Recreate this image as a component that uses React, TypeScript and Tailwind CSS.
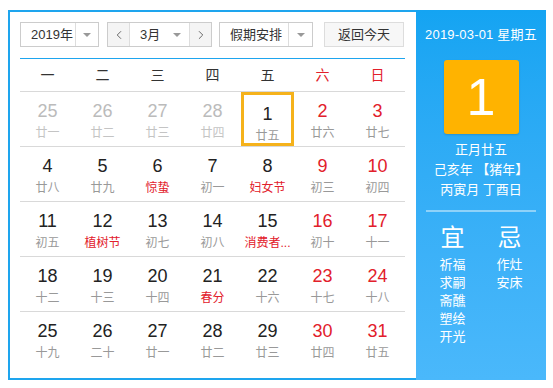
import React from "react";
import { ChevronLeft, ChevronRight } from "lucide-react";

type Day = { n: number; lunar: string; muted?: boolean; redNum?: boolean; redLunar?: boolean; selected?: boolean };

const weeks: Day[][] = [
  [
    { n: 25, lunar: "廿一", muted: true },
    { n: 26, lunar: "廿二", muted: true },
    { n: 27, lunar: "廿三", muted: true },
    { n: 28, lunar: "廿四", muted: true },
    { n: 1, lunar: "廿五", selected: true },
    { n: 2, lunar: "廿六", redNum: true },
    { n: 3, lunar: "廿七", redNum: true },
  ],
  [
    { n: 4, lunar: "廿八" },
    { n: 5, lunar: "廿九" },
    { n: 6, lunar: "惊蛰", redLunar: true },
    { n: 7, lunar: "初一" },
    { n: 8, lunar: "妇女节", redLunar: true },
    { n: 9, lunar: "初三", redNum: true },
    { n: 10, lunar: "初四", redNum: true },
  ],
  [
    { n: 11, lunar: "初五" },
    { n: 12, lunar: "植树节", redLunar: true },
    { n: 13, lunar: "初七" },
    { n: 14, lunar: "初八" },
    { n: 15, lunar: "消费者...", redLunar: true },
    { n: 16, lunar: "初十", redNum: true },
    { n: 17, lunar: "十一", redNum: true },
  ],
  [
    { n: 18, lunar: "十二" },
    { n: 19, lunar: "十三" },
    { n: 20, lunar: "十四" },
    { n: 21, lunar: "春分", redLunar: true },
    { n: 22, lunar: "十六" },
    { n: 23, lunar: "十七", redNum: true },
    { n: 24, lunar: "十八", redNum: true },
  ],
  [
    { n: 25, lunar: "十九" },
    { n: 26, lunar: "二十" },
    { n: 27, lunar: "廿一" },
    { n: 28, lunar: "廿二" },
    { n: 29, lunar: "廿三" },
    { n: 30, lunar: "廿四", redNum: true },
    { n: 31, lunar: "廿五", redNum: true },
  ],
];

const weekdays = ["一", "二", "三", "四", "五", "六", "日"];

const Caret = () => (
  <span className="block w-0 h-0 border-l-[4px] border-r-[4px] border-t-[4px] border-l-transparent border-r-transparent border-t-[#999]" />
);

const DayCell = ({ d }: { d: Day }) => {
  const numColor = d.muted ? "text-[#bbbbbb]" : d.redNum ? "text-[#e2202b]" : "text-[#222]";
  const lunarColor = d.muted ? "text-[#c4c4c4]" : d.redLunar ? "text-[#e2202b]" : "text-[#999]";
  return (
    <div className="flex justify-center">
      <div
        className={`w-[53px] h-[54px] flex flex-col items-center pt-[9px] ${
          d.selected ? "border-[3px] border-[#f5b21b] pt-[6px]" : ""
        }`}
      >
        <span className={`text-[18px] leading-[20px] ${numColor}`}>{d.n}</span>
        <span className={`text-[12px] leading-[16px] mt-[4px] whitespace-nowrap ${lunarColor}`}>{d.lunar}</span>
      </div>
    </div>
  );
};

const App = () => {
  return (
    <div
      className="w-[553px] h-[388px] bg-white pt-[10px] pl-[8px]"
      style={{ fontFamily: '"Liberation Sans", "Noto Sans CJK SC", sans-serif' }}
    >
      <div className="flex w-[538px] h-[370px]">
        {/* calendar */}
        <div className="w-[408px] h-full border-l-2 border-t-2 border-b-2 border-[#1ea5ee] pl-[10px] pt-[10px]">
          {/* controls */}
          <div className="flex items-center h-[25px] text-[13px] text-[#333]">
            <div className="flex h-full w-[79px] border border-[#ccc]">
              <span className="flex-1 flex items-center pl-[10px]">2019年</span>
              <span className="w-[23px] border-l border-[#ddd] flex items-center justify-center">
                <Caret />
              </span>
            </div>
            <div className="flex h-full w-[105px] ml-[8px] border border-[#ccc]">
              <span className="w-[22px] bg-[#f4f4f4] border-r border-[#ddd] flex items-center justify-center text-[#555]">
                <ChevronLeft size={14} strokeWidth={1.5} />
              </span>
              <span className="flex-1 flex items-center pl-[10px]">3月</span>
              <span className="flex items-center pr-[8px]">
                <Caret />
              </span>
              <span className="w-[22px] bg-[#f4f4f4] border-l border-[#ddd] flex items-center justify-center text-[#555]">
                <ChevronRight size={14} strokeWidth={1.5} />
              </span>
            </div>
            <div className="flex h-full w-[94px] ml-[7px] border border-[#ccc]">
              <span className="flex-1 flex items-center pl-[10px]">假期安排</span>
              <span className="w-[24px] border-l border-[#ddd] flex items-center justify-center">
                <Caret />
              </span>
            </div>
            <button className="h-full w-[80px] ml-[11px] border border-[#ddd] bg-[#f7f7f7] text-[13px] text-[#333]">
              返回今天
            </button>
          </div>

          <div className="w-[385px] mt-[11px] border-t border-[#1ea5ee]" />

          {/* weekdays */}
          <div className="grid grid-cols-7 w-[385px] h-[33px] items-center text-[14px] border-b border-[#d9d9d9]">
            {weekdays.map((w, i) => (
              <span key={w} className={`text-center ${i >= 5 ? "text-[#e2202b]" : "text-[#333]"}`}>
                {w}
              </span>
            ))}
          </div>

          {/* days */}
          <div className="w-[385px]">
            {weeks.map((row, ri) => (
              <div
                key={ri}
                className={`grid grid-cols-7 h-[55px] ${ri < weeks.length - 1 ? "border-b border-[#d9d9d9]" : ""}`}
              >
                {row.map((d, di) => (
                  <DayCell key={di} d={d} />
                ))}
              </div>
            ))}
          </div>
        </div>

        {/* side panel */}
        <div className="w-[130px] h-full bg-gradient-to-b from-[#14a4f2] to-[#4ab8fb] text-white flex flex-col items-center">
          <div className="mt-[17px] text-[13px] leading-[16px] tracking-[0.2px]">2019-03-01 星期五</div>
          <div className="mt-[17px] w-[75px] h-[74px] rounded-[3px] bg-[#ffb300] flex items-center justify-center text-[52px] font-light leading-none shadow-[0_1px_2px_rgba(0,0,0,0.15)]">
            1
          </div>
          <div className="mt-[6px] text-[13px] leading-[20px] text-center">
            <div>正月廿五</div>
            <div>己亥年 【猪年】</div>
            <div>丙寅月 丁酉日</div>
          </div>
          <div className="w-[110px] mt-[10px] border-t-2 border-[#8fd2f9]" />
          <div className="flex w-full justify-center gap-[31px] mt-[12px]">
            <div className="flex flex-col items-center">
              <span className="text-[24px] leading-[28px]">宜</span>
              <div className="mt-[4px] text-[13px] leading-[18px] flex flex-col">
                <span>祈福</span>
                <span>求嗣</span>
                <span>斋醮</span>
                <span>塑绘</span>
                <span>开光</span>
              </div>
            </div>
            <div className="flex flex-col items-center">
              <span className="text-[24px] leading-[28px]">忌</span>
              <div className="mt-[4px] text-[13px] leading-[18px] flex flex-col">
                <span>作灶</span>
                <span>安床</span>
              </div>
            </div>
          </div>
        </div>
      </div>
    </div>
  );
};

export default App;
